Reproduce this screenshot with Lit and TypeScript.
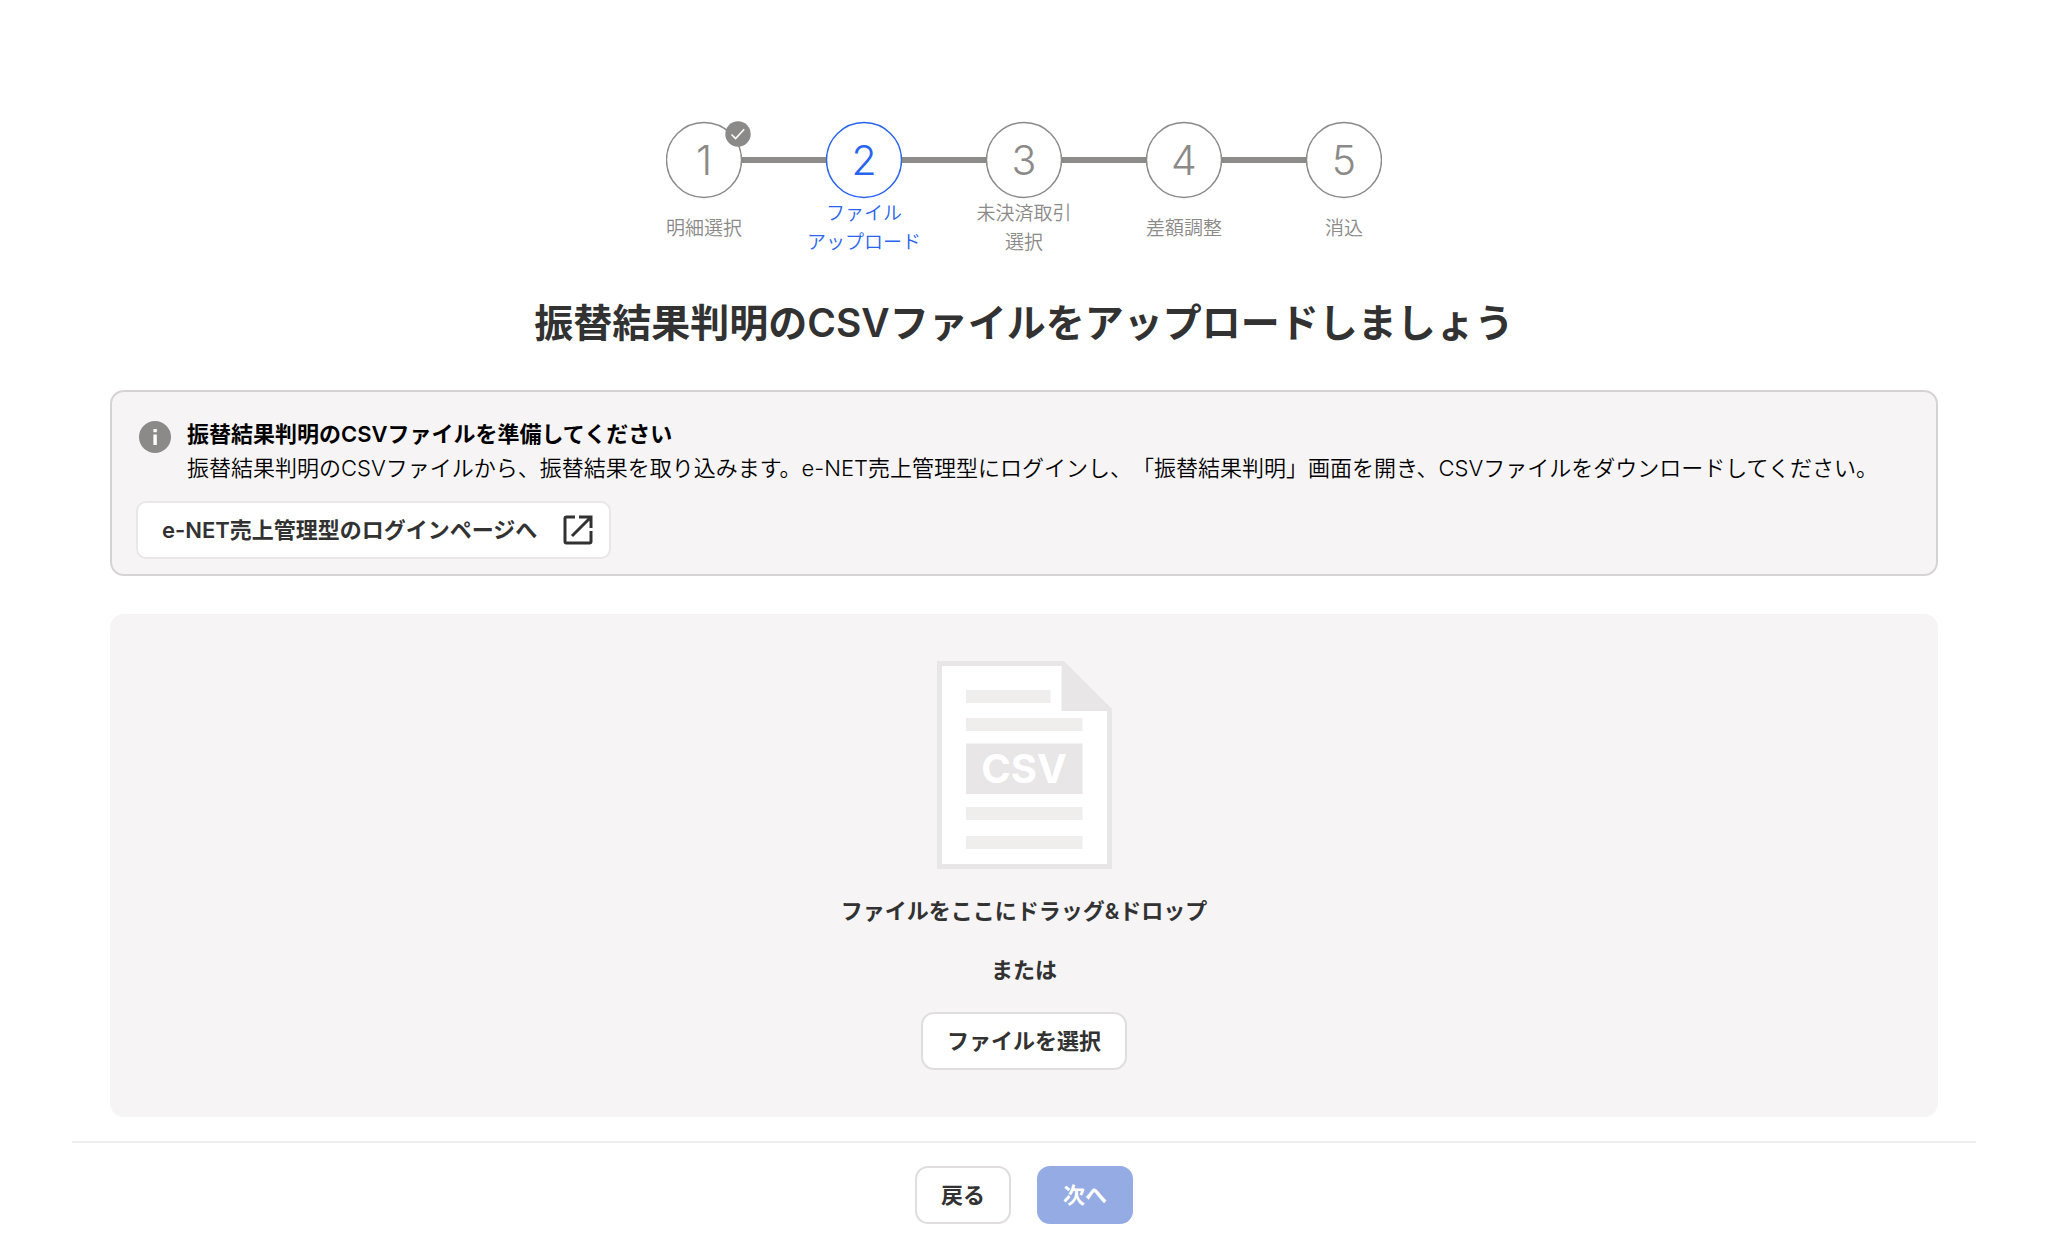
import { LitElement, html, css, nothing } from "lit";
import { customElement, property, query } from "lit/decorators.js";

interface Step {
  label: string[];
  state: "done" | "current" | "todo";
}

const steps: Step[] = [
  { label: ["明細選択"], state: "done" },
  { label: ["ファイル", "アップロード"], state: "current" },
  { label: ["未決済取引", "選択"], state: "todo" },
  { label: ["差額調整"], state: "todo" },
  { label: ["消込"], state: "todo" },
];

@customElement("step-list")
export class StepList extends LitElement {
  @property({ attribute: false }) steps: Step[] = [];

  static styles = css`
    :host {
      display: block;
    }
    .steps {
      display: flex;
      justify-content: center;
      margin: 0;
      padding: 0;
      list-style: none;
    }
    .step {
      width: 160px;
      color: #8b8a88;
    }
    .step.current {
      color: #2864f0;
    }
    .track {
      display: flex;
      align-items: center;
    }
    .line {
      flex: 1;
      height: 6px;
      background: #8c8b87;
    }
    .step:first-child .line:first-child,
    .step:last-child .line:last-child {
      background: transparent;
    }
    .circle {
      position: relative;
      box-sizing: border-box;
      display: flex;
      align-items: center;
      justify-content: center;
      width: 76px;
      height: 78px;
      font-family: Inter, "Noto Sans CJK JP", sans-serif;
      font-size: 41px;
      font-weight: 350;
      line-height: 1;
    }
    .ring {
      position: absolute;
      inset: 0;
    }
    .badge {
      position: absolute;
      top: 0;
      right: -9px;
      width: 26px;
      height: 26px;
    }
    .label {
      display: flex;
      flex-direction: column;
      justify-content: center;
      height: 58px;
      font-size: 19px;
      font-weight: 350;
      line-height: 29px;
      text-align: center;
    }
  `;

  render() {
    return html`<ol class="steps">
      ${this.steps.map(
        (step, i) => html`<li
          class="step ${step.state}"
          aria-current=${step.state === "current" ? "step" : nothing}
        >
          <div class="track">
            <span class="line"></span>
            <span class="circle"
              ><svg class="ring" viewBox="0 0 76 78" aria-hidden="true">
                <circle cx="38" cy="39" r="37.5" fill="none" stroke="currentColor" stroke-width="1.4" /></svg
              >${i + 1}${step.state === "done"
                ? html`<svg class="badge" viewBox="0 0 26 26" aria-hidden="true">
                    <circle cx="13" cy="13" r="12.7" fill="#8b8a88" />
                    <path d="M6.5 13.5 10.6 17.6 19.2 8.2" fill="none" stroke="#fff" stroke-width="1.5" />
                  </svg>`
                : nothing}</span
            >
            <span class="line"></span>
          </div>
          <div class="label">${step.label.map((line) => html`<span>${line}</span>`)}</div>
        </li>`
      )}
    </ol>`;
  }
}

@customElement("app-root")
export class AppRoot extends LitElement {
  @query(".file-input") private fileInput!: HTMLInputElement;

  static styles = css`
    :host {
      display: block;
      color: #323232;
      font-family: Inter, "Noto Sans CJK JP", sans-serif;
      font-size: 22px;
      line-height: 34px;
      text-spacing-trim: space-all;
    }
    .content {
      padding: 121px 110px 24px;
    }
    .title {
      margin: 37px 0 38px;
      font-size: 39px;
      font-weight: 600;
      line-height: 58px;
      text-align: center;
    }
    .notice {
      box-sizing: border-box;
      border: 2px solid #d6d3d4;
      border-radius: 14px;
      padding: 25px 24px 15px;
      background: #f6f4f5;
    }
    .message {
      display: flex;
      gap: 16px;
      color: #000;
    }
    .info {
      flex: none;
      width: 32px;
      height: 32px;
      margin: 4px 0 0 3px;
    }
    .message-title,
    .message-text {
      margin: 0;
      font-size: 22px;
    }
    .message-title {
      font-weight: 600;
    }
    .message-text {
      font-weight: 350;
    }
    .button {
      box-sizing: border-box;
      display: inline-flex;
      align-items: center;
      justify-content: center;
      min-height: 58px;
      padding: 0 24px;
      border: 2px solid #dfdddd;
      border-radius: 13px;
      background: #fff;
      color: #323232;
      font: inherit;
      font-weight: 600;
      text-decoration: none;
      cursor: pointer;
    }
    .link {
      gap: 24px;
      margin-top: 16px;
      padding: 0 14px 0 24px;
      border-color: #e9e7e7;
      border-radius: 10px;
    }
    .external {
      width: 34px;
      height: 34px;
    }
    .drop {
      display: flex;
      flex-direction: column;
      align-items: center;
      margin-top: 38px;
      padding: 47px 24px;
      border-radius: 14px;
      background: #f6f4f5;
      font-weight: 600;
    }
    .file {
      width: 175px;
      height: 208px;
    }
    .csv {
      font-family: Inter, "Noto Sans CJK JP", sans-serif;
      font-size: 40px;
      font-weight: 700;
    }
    .drop-text {
      margin: 25px 0 0;
    }
    .footer {
      display: flex;
      justify-content: center;
      gap: 26px;
      margin: 0 72px;
      padding: 23px 0;
      border-top: 2px solid #eeeeee;
    }
    .primary {
      border-color: #94abe4;
      background: #94abe4;
      color: #fff;
      cursor: default;
    }
  `;

  private chooseFile() {
    this.fileInput.click();
  }

  render() {
    return html`
      <main class="content">
        <step-list .steps=${steps}></step-list>
        <h1 class="title">振替結果判明のCSVファイルをアップロードしましょう</h1>
        <section class="notice">
          <div class="message">
            <svg class="info" viewBox="0 0 32 32" aria-hidden="true">
              <circle cx="16" cy="16" r="16" fill="#8b8a88" />
              <path d="M14.4 8h3.4v3.2h-3.4zM14.4 13.6h3.4v10.4h-3.4z" fill="#fff" />
            </svg>
            <div>
              <h2 class="message-title">振替結果判明のCSVファイルを準備してください</h2>
              <p class="message-text">振替結果判明のCSVファイルから、振替結果を取り込みます。e-NET売上管理型にログインし、「振替結果判明」画面を開き、CSVファイルをダウンロードしてください。</p>
            </div>
          </div>
          <a class="button link" href="#login">
            e-NET売上管理型のログインページへ
            <svg class="external" viewBox="0 0 34 34" aria-hidden="true">
              <path
                d="M14 4H5.5Q4 4 4 5.5V28.5Q4 30 5.5 30H28.5Q30 30 30 28.5V18M18 4H30V15M30 4 11 23"
                fill="none" stroke="#323232" stroke-width="3"
              />
            </svg>
          </a>
        </section>
        <section class="drop">
          <svg class="file" viewBox="0 0 175 208" aria-hidden="true">
            <path d="M0 0H127L175 48V208H0Z" fill="#e8e6e7" />
            <path d="M5 5H124.500V50H170V203H5Z" fill="#fff" />
            <path d="M29 29h84.500v13H29zM29 57h116.500v13H29zM29 146h116.500v13H29zM29 175h116.500v13H29z" fill="#efeeec" />
            <path d="M29 82.500h116.500v50.500H29z" fill="#e8e6e7" />
            <text class="csv" x="87" y="122" text-anchor="middle" fill="#fff">CSV</text>
          </svg>
          <p class="drop-text">ファイルをここにドラッグ&amp;ドロップ</p>
          <p class="drop-text">または</p>
          <button class="button drop-text" type="button" @click=${this.chooseFile}>ファイルを選択</button>
          <input class="file-input" type="file" accept=".csv" aria-label="ファイルを選択" hidden />
        </section>
      </main>
      <footer class="footer">
        <button class="button" type="button">戻る</button>
        <button class="button primary" type="button" disabled>次へ</button>
      </footer>
    `;
  }
}
